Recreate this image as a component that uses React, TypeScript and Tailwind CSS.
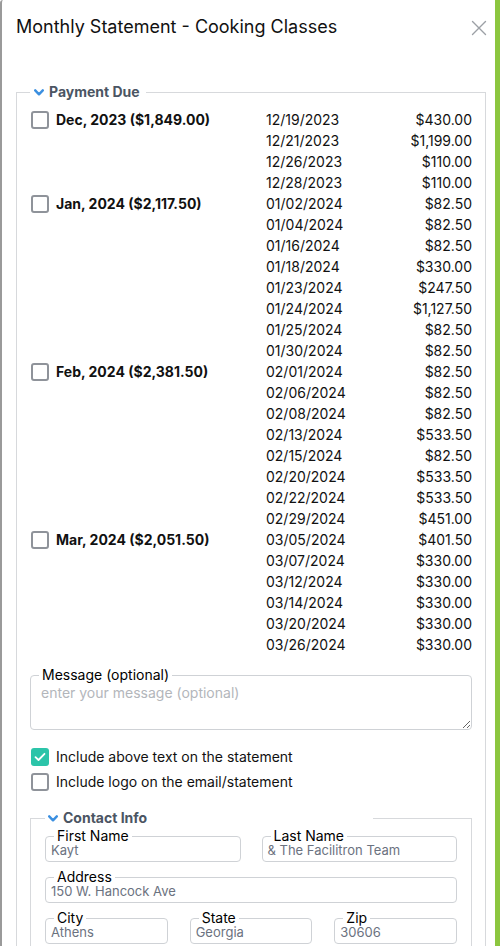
import React from 'react';

type Charge = { date: string; amount: string };
type Month = { label: string; charges: Charge[] };

const months: Month[] = [
  {
    label: 'Dec, 2023 ($1,849.00)',
    charges: [
      { date: '12/19/2023', amount: '$430.00' },
      { date: '12/21/2023', amount: '$1,199.00' },
      { date: '12/26/2023', amount: '$110.00' },
      { date: '12/28/2023', amount: '$110.00' },
    ],
  },
  {
    label: 'Jan, 2024 ($2,117.50)',
    charges: [
      { date: '01/02/2024', amount: '$82.50' },
      { date: '01/04/2024', amount: '$82.50' },
      { date: '01/16/2024', amount: '$82.50' },
      { date: '01/18/2024', amount: '$330.00' },
      { date: '01/23/2024', amount: '$247.50' },
      { date: '01/24/2024', amount: '$1,127.50' },
      { date: '01/25/2024', amount: '$82.50' },
      { date: '01/30/2024', amount: '$82.50' },
    ],
  },
  {
    label: 'Feb, 2024 ($2,381.50)',
    charges: [
      { date: '02/01/2024', amount: '$82.50' },
      { date: '02/06/2024', amount: '$82.50' },
      { date: '02/08/2024', amount: '$82.50' },
      { date: '02/13/2024', amount: '$533.50' },
      { date: '02/15/2024', amount: '$82.50' },
      { date: '02/20/2024', amount: '$533.50' },
      { date: '02/22/2024', amount: '$533.50' },
      { date: '02/29/2024', amount: '$451.00' },
    ],
  },
  {
    label: 'Mar, 2024 ($2,051.50)',
    charges: [
      { date: '03/05/2024', amount: '$401.50' },
      { date: '03/07/2024', amount: '$330.00' },
      { date: '03/12/2024', amount: '$330.00' },
      { date: '03/14/2024', amount: '$330.00' },
      { date: '03/20/2024', amount: '$330.00' },
      { date: '03/26/2024', amount: '$330.00' },
    ],
  },
];

const Chevron: React.FC = () => (
  <svg width="10" height="7" viewBox="0 0 10 7" className="shrink-0">
    <path d="M1.2 1.3 L5 5.3 L8.8 1.3" fill="none" stroke="#3b8fe0" strokeWidth="2.4" strokeLinecap="round" strokeLinejoin="round" />
  </svg>
);

const Checkbox: React.FC<{ checked?: boolean }> = ({ checked }) =>
  checked ? (
    <span className="w-[18px] h-[18px] rounded-[3px] bg-[#2bc4a9] flex items-center justify-center shrink-0">
      <svg width="12" height="10" viewBox="0 0 12 10">
        <path d="M1.5 5.2 L4.5 8 L10.5 1.8" fill="none" stroke="white" strokeWidth="1.8" strokeLinecap="round" strokeLinejoin="round" />
      </svg>
    </span>
  ) : (
    <span className="w-[18px] h-[18px] rounded-[3px] border-2 border-[#8f939a] bg-white shrink-0" />
  );

const Field: React.FC<{ label: string; value: string }> = ({ label, value }) => (
  <fieldset className="border border-[#cfd2d6] rounded-[4px] min-w-0">
    <legend className="ml-[8px] px-[3px] text-sm leading-[14px] text-black">{label}</legend>
    <div className="px-[5px] pt-[1px] pb-[4px] text-[13px] leading-[13px] text-[#6b7280] truncate">{value}</div>
  </fieldset>
);

export default function App() {
  return (
    <div className="w-[500px] h-[946px] overflow-hidden bg-white flex" style={{ fontFamily: 'Inter, "Noto Sans", sans-serif' }}>
      <div className="flex-1 min-w-0 border-l-2 border-[#9a9a9a] rounded-tl-[3px]">
        {/* Header */}
        <div className="flex items-start justify-between pt-[13px] pl-[14px] pr-[8px]">
          <h1 className="text-[18px] leading-[28px] text-[#111]">Monthly Statement - Cooking Classes</h1>
          <svg width="16" height="16" viewBox="0 0 16 16" className="mt-[7px]">
            <path d="M1.5 1.5 L14.5 14.5 M14.5 1.5 L1.5 14.5" stroke="#9ca0a6" strokeWidth="1.4" strokeLinecap="round" />
          </svg>
        </div>

        {/* Payment Due */}
        <fieldset className="mt-[41px] ml-[14px] mr-[9px] border border-[#d7d9dc] px-[13px] pb-[20px]">
          <legend className="flex items-center gap-[5px] pl-[4px] pr-[6px] text-sm leading-[20px] font-bold text-[#4b5563]">
            <Chevron />
            <span>Payment Due</span>
          </legend>

          <div className="pt-[7px] flex flex-col">
            {months.map((m) => (
              <div key={m.label} className="flex">
                <div className="w-[236px] h-[21px] flex items-center gap-[7px] pl-[1px]">
                  <Checkbox />
                  <span className="text-sm font-bold text-[#111]">{m.label}</span>
                </div>
                <div className="flex-1 flex flex-col">
                  {m.charges.map((c) => (
                    <div key={c.date} className="h-[21px] flex items-center justify-between text-sm text-[#111]">
                      <span>{c.date}</span>
                      <span>{c.amount}</span>
                    </div>
                  ))}
                </div>
              </div>
            ))}
          </div>

          {/* Message */}
          <fieldset className="mt-[13px] border border-[#cfd2d6] rounded-[4px]">
            <legend className="ml-[8px] px-[3px] text-sm leading-[14px] text-black">Message (optional)</legend>
            <textarea
              className="block w-full h-[47px] px-[10px] py-[1px] text-sm leading-[20px] text-[#111] placeholder:text-[#b3b6bb] outline-none resize-y bg-transparent"
              placeholder="enter your message (optional)"
            />
          </fieldset>

          {/* Options */}
          <div className="mt-[14px] flex flex-col">
            <label className="h-[25px] flex items-center gap-[7px] pl-[1px] text-sm text-[#111]">
              <Checkbox checked />
              <span>Include above text on the statement</span>
            </label>
            <label className="h-[25px] flex items-center gap-[7px] pl-[1px] text-sm text-[#111]">
              <Checkbox />
              <span>Include logo on the email/statement</span>
            </label>
          </div>

          {/* Contact Info */}
          <fieldset className="mt-[14px] border border-[#d7d9dc] px-[14px] pb-[14px]">
            <legend className="w-[328px] flex items-center gap-[5px] pl-[3px] text-sm leading-[20px] font-bold text-[#4b5563]">
              <Chevron />
              <span>Contact Info</span>
            </legend>
            <div className="pt-[1px] flex flex-col gap-[8px]">
              <div className="grid grid-cols-2 gap-[21px]">
                <Field label="First Name" value="Kayt" />
                <Field label="Last Name" value="& The Facilitron Team" />
              </div>
              <Field label="Address" value="150 W. Hancock Ave" />
              <div className="grid grid-cols-3 gap-[22px]">
                <Field label="City" value="Athens" />
                <Field label="State" value="Georgia" />
                <Field label="Zip" value="30606" />
              </div>
            </div>
          </fieldset>
        </fieldset>
      </div>
      <div className="w-[5px] bg-[#8cc63f] shrink-0" />
    </div>
  );
}
